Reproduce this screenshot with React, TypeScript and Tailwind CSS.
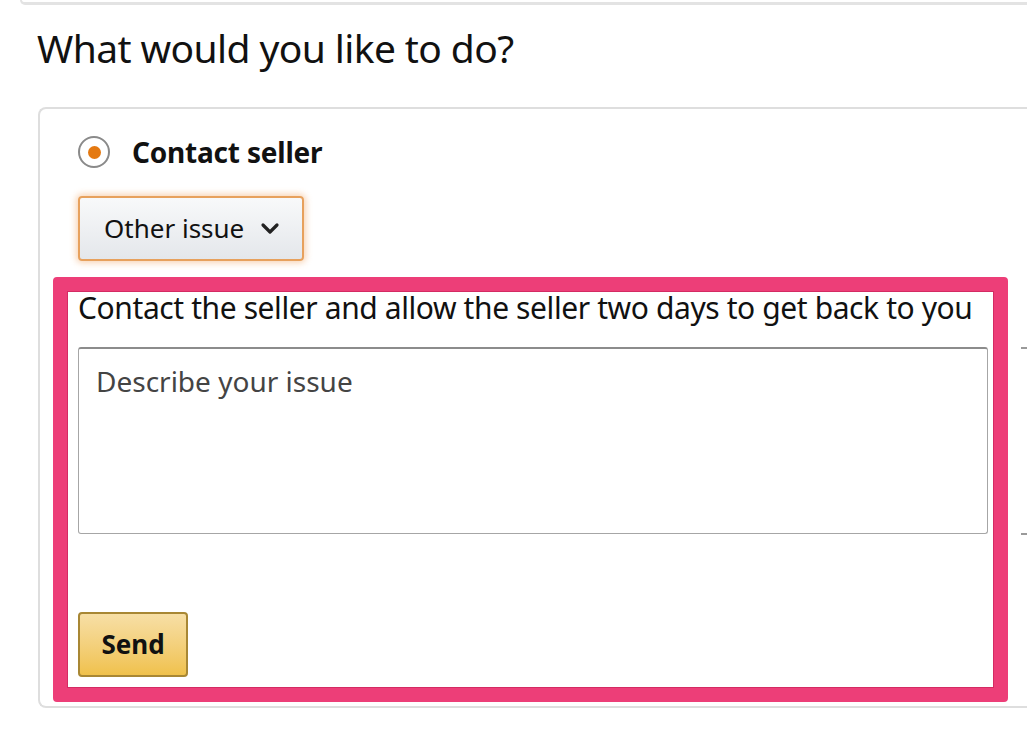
export default function App() {
  return (
    <div
      className="w-[1027px] h-[753px] overflow-hidden bg-white text-[#111]"
      style={{ fontFamily: '"Noto Sans", "Open Sans", Arial, sans-serif' }}
    >
      {/* tail of the card above */}
      <div className="ml-[20px] h-[5px] border-b-[3px] border-l-2 border-[#e3e3e3] rounded-bl-md" />

      <h1 className="ml-[37px] mt-[20px] text-[39px] leading-[46px] font-normal tracking-[-0.6px]">
        What would you like to do?
      </h1>

      <div className="ml-[38px] mt-[36px] h-[601px] border-2 border-r-0 border-[#dedede] rounded-l-lg pl-[13px] pt-[26px]">
        <label className="ml-[25px] flex items-center gap-[22px] h-[34px]">
          <span className="w-[32px] h-[32px] rounded-full border-2 border-[#8a8a8a] flex items-center justify-center">
            <span className="w-[13px] h-[13px] rounded-full bg-[#e47911]" />
          </span>
          <span className="text-[28px] font-bold tracking-[-0.2px]">Contact seller</span>
        </label>

        <button className="ml-[25px] mt-[27px] w-[226px] h-[65px] rounded-[4px] border-2 border-[#e7a15d] bg-gradient-to-b from-[#f8f9fa] to-[#e4e7eb] shadow-[0_0_6px_2px_rgba(240,160,90,0.45)] flex items-center pl-[24px] gap-[16px] text-[26px] text-[#111]">
          <span>Other issue</span>
          <svg width="20" height="14" viewBox="0 0 20 14" fill="none">
            <path d="M3 3l7 7 7-7" stroke="#222" strokeWidth="3.2" strokeLinecap="round" strokeLinejoin="round" />
          </svg>
        </button>

        <div className="mt-[16px] flex items-start">
          <div className="w-[955px] h-[425px] border-[14px] border-[#ed3e78] rounded-[4px] pl-[11px] pr-[6px] shadow-[inset_0_0_0_1px_#d42b63]">
            <p className="text-[30px] leading-[34px] tracking-[-0.4px] whitespace-nowrap">
              Contact the seller and allow the seller two days to get back to you
            </p>
            <textarea
              placeholder="Describe your issue"
              className="block mt-[22px] w-[910px] h-[187px] resize-none border border-[#a6a6a6] border-t-[#8c8c8c] border-t-2 rounded-[3px] px-[17px] py-[14px] text-[28px] leading-[36px] placeholder:text-[#444] outline-none"
            />
            <button className="mt-[78px] w-[110px] h-[65px] rounded-[4px] border-2 border-[#a88734] bg-gradient-to-b from-[#f7dfa5] to-[#f0c14b] text-[26px] font-bold text-[#111]">
              Send
            </button>
          </div>
          <div className="ml-[13px] mt-[70px] w-[10px] h-[188px] border-t-2 border-b-2 border-[#9a9a9a]" />
        </div>
      </div>
    </div>
  );
}
